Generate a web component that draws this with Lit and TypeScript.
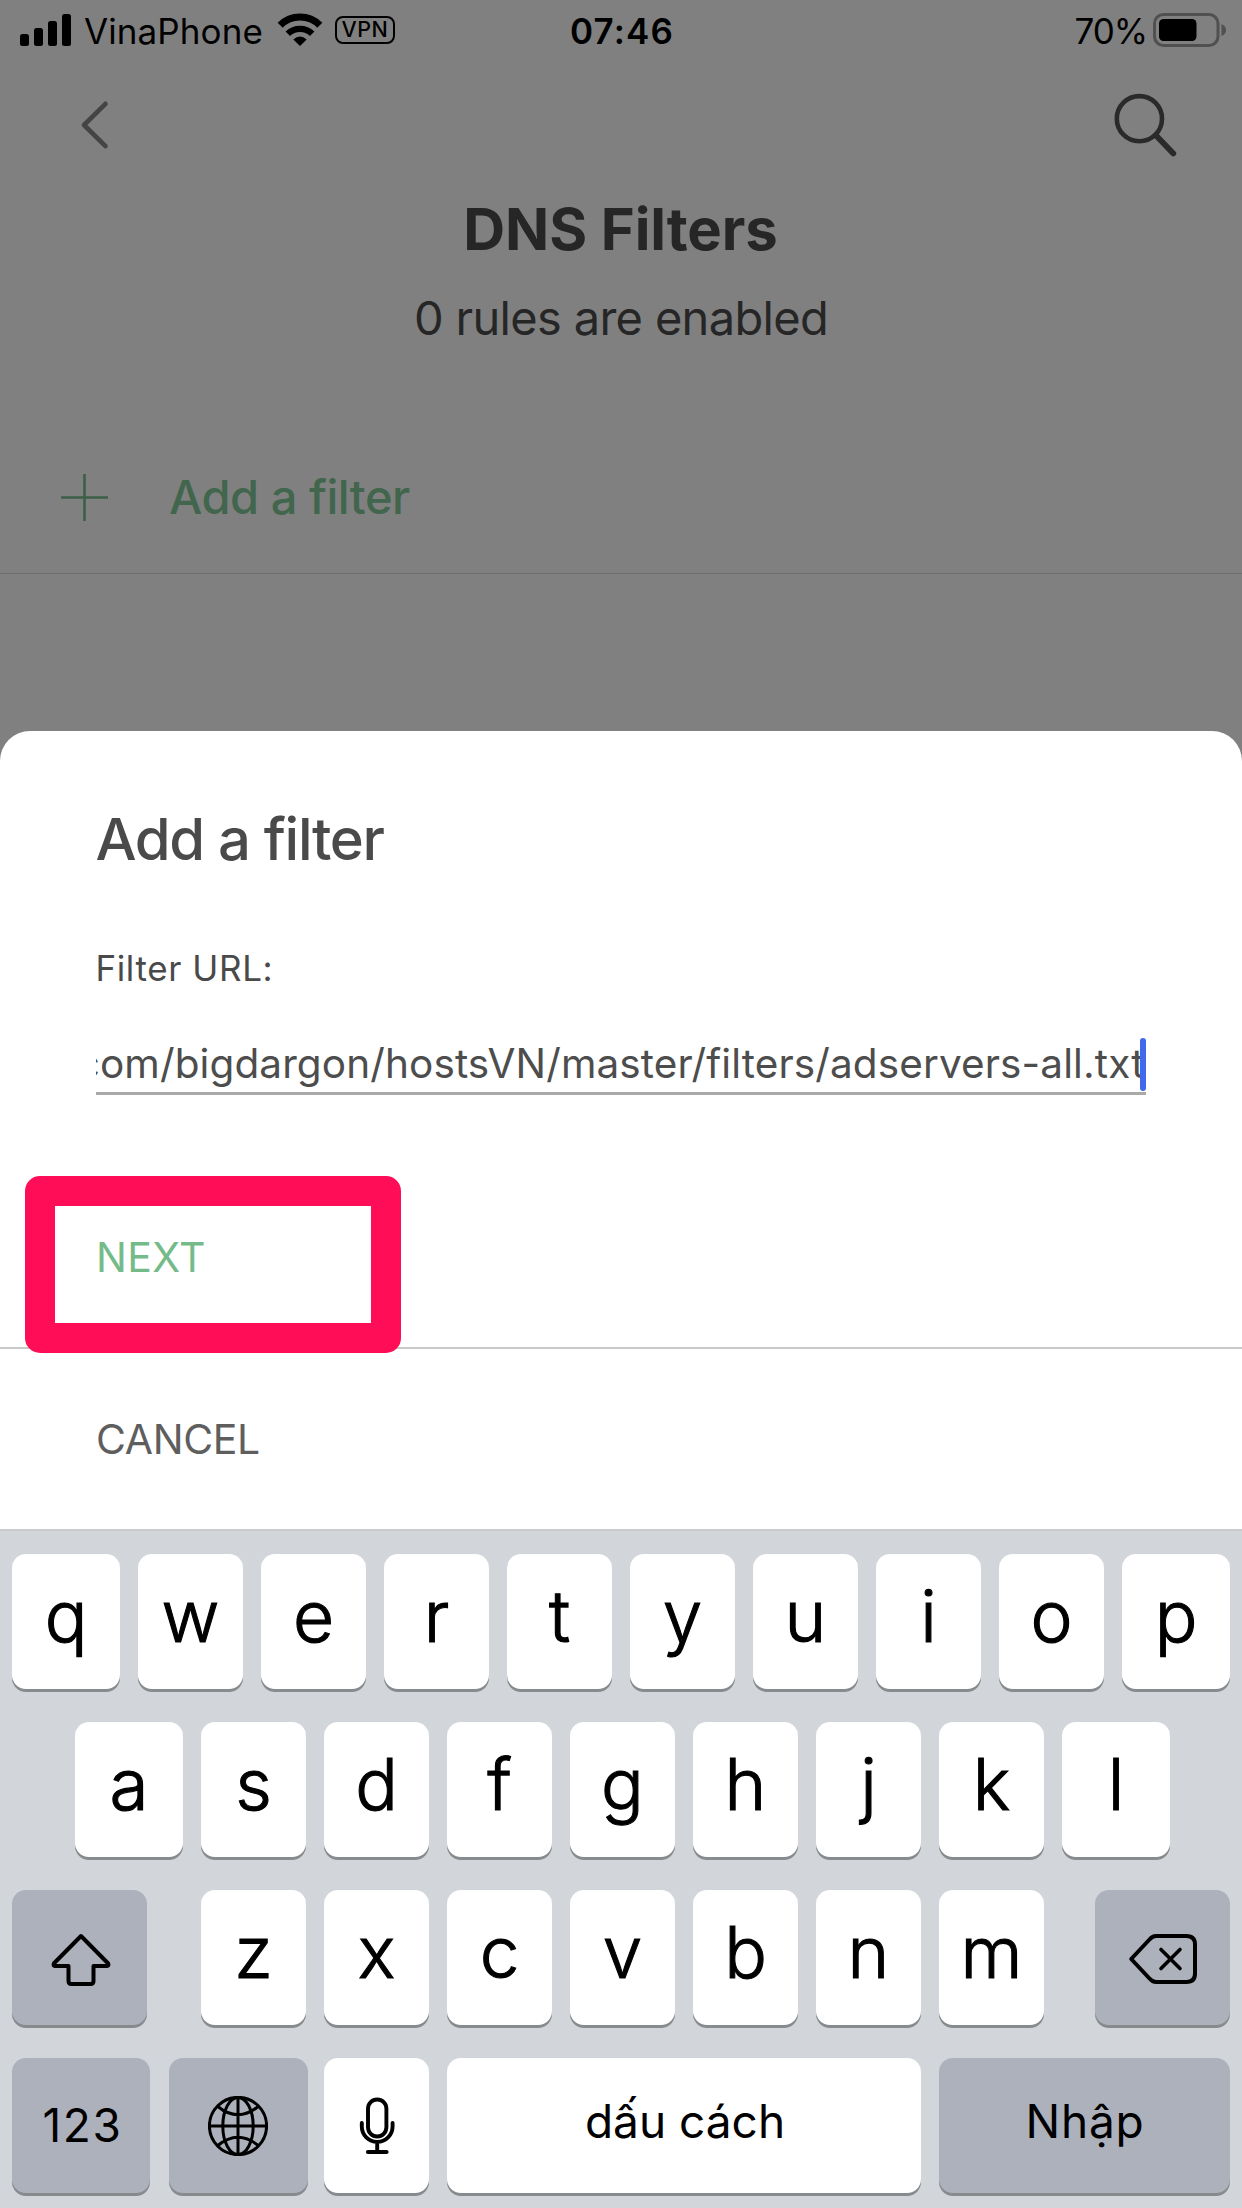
import { LitElement, html, css, svg } from "lit";
import { customElement, property } from "lit/decorators.js";

/* ---------- Status bar ---------- */

@customElement("status-bar")
export class StatusBar extends LitElement {
  static styles = css`
    :host {
      display: grid;
      grid-template-columns: 1fr auto 1fr;
      align-items: center;
      height: 62px;
      color: #000;
      font: 400 35px/62px Inter, "Liberation Sans", sans-serif;
      white-space: nowrap;
    }
    svg { display: block; flex: none; }
    .side { display: flex; align-items: center; }
    .left { padding-left: 20px; }
    .right { justify-content: flex-end; padding-right: 16px; }
    .carrier { margin: 0 14px 0 13px; letter-spacing: 0.1px; }
    .vpn {
      box-sizing: border-box;
      width: 60px;
      height: 28px;
      margin: -2px 0 0 12px;
      border: 2.5px solid #000;
      border-radius: 8px;
      font-size: 21.5px;
      font-weight: 500;
      line-height: 23px;
      letter-spacing: 0.5px;
      text-align: center;
    }
    .time { padding-left: 2px; font-weight: 600; letter-spacing: 1.2px; }
    .percent { margin-right: 6px; letter-spacing: -1.1px; }
  `;

  render() {
    return html`
      <div class="side left">
        <svg width="51" height="62" viewBox="20 0 51 62">
          <rect x="20" y="34" width="9" height="12" rx="2.5" />
          <rect x="34" y="28" width="9" height="18" rx="2.5" />
          <rect x="48" y="21" width="9" height="25" rx="2.5" />
          <rect x="62" y="14" width="9" height="32" rx="2.5" />
        </svg>
        <span class="carrier">VinaPhone</span>
        <svg width="46" height="62" viewBox="277 0 46 62">
          <path d="M280.200 25.200A28 28 0 0 1 319.800 25.200" fill="none" stroke="#000" stroke-width="7.200" />
          <path d="M287.800 33.800A17.500 17.500 0 0 1 312.200 33.800" fill="none" stroke="#000" stroke-width="6.400" />
          <path d="M293.300 39.500Q300 33.500 306.700 39.500L300 46Z" />
        </svg>
        <span class="vpn">VPN</span>
      </div>
      <span class="time">07:46</span>
      <div class="side right">
        <span class="percent">70%</span>
        <svg width="73" height="62" viewBox="1153 0 73 62">
          <rect x="1154.500" y="14.500" width="63.500" height="31" rx="9" fill="none" stroke="#505050" stroke-width="3" />
          <rect x="1159" y="19" width="37.500" height="22" rx="4.500" />
          <path d="M1221.500 24Q1226 26 1226 30T1221.500 36Z" fill="#505050" />
        </svg>
      </div>
    `;
  }
}

/* ---------- Filters page ---------- */

@customElement("filters-page")
export class FiltersPage extends LitElement {
  static styles = css`
    :host {
      display: flex;
      flex-direction: column;
      color: #262626;
      font-family: Inter, "Liberation Sans", sans-serif;
      white-space: nowrap;
    }
    svg { display: block; }
    .nav {
      display: flex;
      justify-content: space-between;
      align-items: center;
      height: 126px;
      padding: 0 64px 0 80px;
    }
    .title {
      margin: 6px 0 0;
      padding-right: 1px;
      font-size: 58px;
      font-weight: 700;
      line-height: 70px;
      letter-spacing: -0.1px;
      text-align: center;
    }
    .count {
      margin: 24px 0 0;
      font-size: 47px;
      line-height: 60px;
      letter-spacing: -0.68px;
      text-align: center;
    }
    .add {
      display: flex;
      align-items: center;
      gap: 61px;
      height: 152px;
      margin-top: 73px;
      padding-left: 61px;
      border-bottom: 1px solid #6e6e6e;
      color: #41664d;
      font-size: 47px;
      font-weight: 500;
      letter-spacing: -0.48px;
    }
    .add span { padding-bottom: 2px; }
  `;

  render() {
    return html`
      <div class="nav">
        <svg width="30" height="50" viewBox="80 100 30 50" fill="none" stroke="#444" stroke-width="4.600"
          stroke-linecap="round" stroke-linejoin="round">
          <path d="M105.500 103.800L84 125L105.500 146.200" />
        </svg>
        <svg width="64" height="64" viewBox="1114 93 64 64" fill="none" stroke="#2a2a2a" stroke-linecap="round">
          <circle cx="1139.400" cy="118.700" r="22.600" stroke-width="4.600" />
          <path d="M1157 136.500L1173.300 153.500" stroke-width="5.800" />
        </svg>
      </div>
      <h1 class="title">DNS Filters</h1>
      <p class="count">0 rules are enabled</p>
      <div class="add">
        <svg width="47" height="47" viewBox="0 0 47 47" stroke="#3d5f48" stroke-width="2.600">
          <path d="M23.500 0V47M0 23.500H47" />
        </svg>
        <span>Add a filter</span>
      </div>
    `;
  }
}

/* ---------- Bottom sheet ---------- */

@customElement("add-filter-sheet")
export class AddFilterSheet extends LitElement {
  @property() url = "com/bigdargon/hostsVN/master/filters/adservers-all.txt";

  static styles = css`
    :host {
      display: flex;
      flex-direction: column;
      box-sizing: border-box;
      height: 798px;
      padding-top: 73px;
      border-radius: 30px 30px 0 0;
      background: #fff;
      color: #4a4a4a;
      font-family: Inter, "Liberation Sans", sans-serif;
      white-space: nowrap;
    }
    .title {
      margin: 0;
      padding-left: 95.5px;
      font-size: 58px;
      font-weight: 500;
      line-height: 70px;
      letter-spacing: -1.33px;
    }
    .label {
      margin-top: 74px;
      padding-left: 95.5px;
      font-size: 35px;
      line-height: 41px;
      letter-spacing: 0.6px;
    }
    .field {
      position: relative;
      margin: 48px 96px 0;
      border-bottom: 3px solid #a9a9a9;
    }
    .clip {
      display: flex;
      justify-content: flex-end;
      overflow: hidden;
      height: 55px;
      padding-right: 1.5px;
      font-size: 40.5px;
      line-height: 54px;
      letter-spacing: 0.11px;
      color: #4d4d4d;
    }
    .caret {
      position: absolute;
      right: 0;
      top: 1px;
      width: 6px;
      height: 53px;
      border-radius: 3px;
      background: #4169ec;
    }
    .action {
      position: relative;
      box-sizing: border-box;
      padding-left: 96px;
      font-size: 41px;
      line-height: 180px;
    }
    .next {
      margin-top: 72px;
      border-bottom: 2px solid #c9c9c9;
      color: #74bb89;
      letter-spacing: 0.37px;
    }
    .cancel { color: #5e5e5e; letter-spacing: -0.38px; }
    .marker {
      position: absolute;
      left: 25px;
      top: 9px;
      box-sizing: border-box;
      width: 376px;
      height: 177px;
      border: 30px solid #ff0d57;
      border-radius: 15px;
    }
  `;

  render() {
    return html`
      <h2 class="title">Add a filter</h2>
      <div class="label">Filter URL:</div>
      <div class="field">
        <div class="clip"><span>${this.url}</span></div>
        <i class="caret"></i>
      </div>
      <div class="action next">NEXT<i class="marker"></i></div>
      <div class="action cancel">CANCEL</div>
    `;
  }
}

/* ---------- Keyboard ---------- */

const shiftIcon = svg`
  <svg width="62" height="56" viewBox="49.500 1930 62 56" fill="none" stroke="#000" stroke-width="4" stroke-linejoin="round">
    <path d="M81.500 1935L54.300 1962.500Q53.500 1965 55.500 1965H69V1980Q69 1983 72 1983H91Q94 1983 94 1980V1965H107.500Q109.500 1965 108.700 1962.500Z" />
  </svg>`;

const deleteIcon = svg`
  <svg width="70" height="52" viewBox="1128 1933 70 52" fill="none" stroke="#000" stroke-width="4" stroke-linecap="round" stroke-linejoin="round">
    <path d="M1131.200 1959L1149.500 1939.500Q1152.500 1936 1156 1936H1186.500Q1195 1936 1195 1944.500V1973.500Q1195 1982 1186.500 1982H1156Q1152.500 1982 1149.500 1978.500Z" />
    <path d="M1161 1949.500L1180 1968.500M1180 1949.500L1161 1968.500" stroke-width="3.600" />
  </svg>`;

const globeIcon = svg`
  <svg width="60" height="60" viewBox="0 0 60 60" fill="none" stroke="#000" stroke-width="3">
    <circle cx="30" cy="30" r="28.600" />
    <ellipse cx="30" cy="30" rx="15.200" ry="28.600" />
    <path d="M30 1.500V58.500M1.500 30H58.500M9.800 10.500Q30 27 50.200 10.500M9.800 49.500Q30 33 50.200 49.500" />
  </svg>`;

const micIcon = svg`
  <svg width="36" height="58" viewBox="0 0 36 58" fill="none" stroke="#000" stroke-width="3.900" stroke-linecap="round">
    <rect x="9" y="2.500" width="18.400" height="37" rx="9.200" />
    <path d="M2.800 26V29.500A15.400 15.400 0 0 0 33.600 29.500V26M18.200 45V54.500" />
    <path d="M9 55H27.500" stroke-width="4.200" />
  </svg>`;

@customElement("soft-keyboard")
export class SoftKeyboard extends LitElement {
  static styles = css`
    :host {
      display: flex;
      flex-direction: column;
      gap: 33px;
      box-sizing: border-box;
      height: 679px;
      padding: 23px 12px 0;
      border-top: 2px solid #cacccd;
      background: #d2d5da;
      color: #000;
      font-family: Inter, "Liberation Sans", sans-serif;
      white-space: nowrap;
    }
    svg { display: block; }
    .row { display: flex; gap: 18px; height: 135px; }
    .inset { padding: 0 60px 0 63px; }
    .spread { justify-content: space-between; gap: 0; }
    .middle { display: flex; gap: 18px; margin-left: 3px; }
    .key {
      display: flex;
      justify-content: center;
      align-items: center;
      box-sizing: border-box;
      width: 105px;
      height: 135px;
      border-radius: 14px;
      background: #fff;
      box-shadow: 0 3px 0 #878b8e;
      font-size: 46px;
    }
    .letter {
      padding-bottom: 12px;
      font-size: 71px;
      font-weight: 300;
      -webkit-text-stroke: 1.1px #000;
    }
    .edge { width: 108px; }
    .dark { background: #adb1bc; }
    .side { width: 135px; }
    .numbers { width: 138px; letter-spacing: 1.6px; padding: 0 0 2px 3px; }
    .globe { width: 139px; margin: 0 -2px 0 1px; padding-right: 1px; }
    .space { width: 474px; padding: 0 0 9px 2px; letter-spacing: 0; }
    .enter { width: 291px; padding: 0 0 9px 1px; letter-spacing: 0.77px; }
    .nudge { padding-top: 2px; }
  `;

  private letters(row: string, edges: boolean) {
    return [...row].map((c, i) => {
      const wide = edges && (i === 0 || i === row.length - 1);
      return html`<div class="key letter ${wide ? "edge" : ""}">${c}</div>`;
    });
  }

  render() {
    return html`
      <div class="row">${this.letters("qwertyuiop", true)}</div>
      <div class="row inset">${this.letters("asdfghjkl", true)}</div>
      <div class="row spread">
        <div class="key dark side nudge">${shiftIcon}</div>
        <div class="middle">${this.letters("zxcvbnm", false)}</div>
        <div class="key dark side nudge">${deleteIcon}</div>
      </div>
      <div class="row">
        <div class="key dark numbers">123</div>
        <div class="key dark globe">${globeIcon}</div>
        <div class="key mic">${micIcon}</div>
        <div class="key space">dấu cách</div>
        <div class="key dark enter">Nhập</div>
      </div>
    `;
  }
}

/* ---------- Screen ---------- */

@customElement("app-root")
export class AppRoot extends LitElement {
  static styles = css`
    :host {
      display: flex;
      flex-direction: column;
      width: 1242px;
      height: 2208px;
      overflow: hidden;
      background: #808080;
    }
    .sheet { margin-top: 157px; }
  `;

  render() {
    return html`
      <status-bar></status-bar>
      <filters-page></filters-page>
      <add-filter-sheet class="sheet"></add-filter-sheet>
      <soft-keyboard></soft-keyboard>
    `;
  }
}
